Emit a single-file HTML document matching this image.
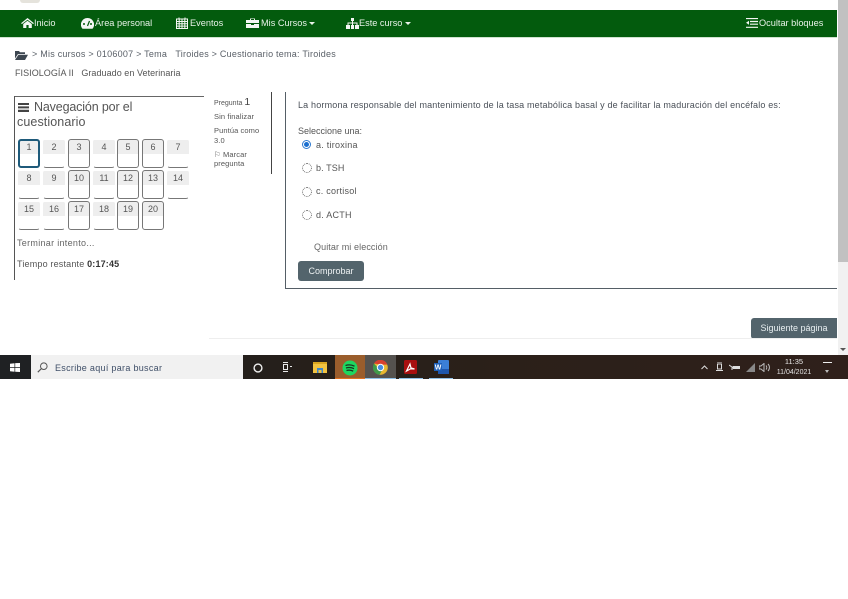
<!DOCTYPE html>
<html lang="es">
<head>
<meta charset="utf-8">
<title>Cuestionario tema: Tiroides</title>
<style>
html{margin:0;padding:0;background:#fff;width:848px;height:599px;overflow:hidden}
body{margin:0;padding:0;background:#fff;width:848px;height:599px;overflow:hidden;position:relative;font-family:"Liberation Sans",sans-serif;color:#4a5258;filter:blur(.3px)}
.a{position:absolute;white-space:nowrap}
.t{position:absolute;white-space:nowrap;font-size:9px;line-height:12px;letter-spacing:.1px}
svg{position:absolute;display:block}
.nav{color:#e8f2e8;font-size:9.2px;line-height:12px;top:17px}
.q{position:absolute;border:1px solid #777;border-radius:3px;background:linear-gradient(#eee 0,#eee 14px,#fff 14px);font-size:9px;line-height:14px;text-align:center;color:#555;box-sizing:border-box;height:29px;width:22px}
.q.n{border-color:transparent;border-bottom-color:#777;border-radius:3px}
.r{position:absolute;left:303px;width:8px;height:8px;border:1px dotted #666;border-radius:50%}
</style>
</head>
<body>
<div class="a" style="left:20px;top:0;width:20px;height:3px;background:#e5e3dc;border-radius:0 0 8px 8px"></div>

<!-- nav -->
<div class="a" style="left:0;top:10px;width:837px;height:27px;background:#035b0d;border-bottom:1px solid #cfe3cf"></div>
<svg style="left:21px;top:18px" width="13" height="10" viewBox="0 0 13 10"><path d="M6.500 0L13 5.200 12 6 6.500 1.800 1 6 0 5.200zM2.200 6L6.500 2.700 10.800 6v4H7.600V7H5.400v3H2.200z" fill="#f4f7f4"/></svg>
<div class="a nav" style="left:34px">Inicio</div>
<svg style="left:81px;top:18px" width="13" height="11" viewBox="0 0 13 11"><path d="M6.500 0a6.500 6.500 0 0 0-5 10.700h10A6.500 6.500 0 0 0 6.500 0z" fill="#f4f7f4"/><path d="M6.500 8L8.500 3" stroke="#035b0d" stroke-width="1.200"/><circle cx="3" cy="6" r="1" fill="#035b0d"/><circle cx="10" cy="6" r="1" fill="#035b0d"/></svg>
<div class="a nav" style="left:95px">Área personal</div>
<svg style="left:176px;top:17px" width="12" height="12" viewBox="0 0 12 12"><path d="M.5 2h11v9.500H.5zM.5 4.500h11M.5 6.800h11M.5 9.100h11M3.200 2v9.500M6 2v9.500M8.800 2v9.500M3 .5v2M9 .5v2" fill="none" stroke="#f4f7f4" stroke-width="1"/></svg>
<div class="a nav" style="left:190px">Eventos</div>
<svg style="left:246px;top:18px" width="13" height="10" viewBox="0 0 13 10"><path d="M4 2V.5h5V2h4v3H0V2zM5 1v1h3V1zM0 6h5v1h3V6h5v4H0z" fill="#f4f7f4"/></svg>
<div class="a nav" style="left:261px">Mis Cursos</div>
<svg style="left:309px;top:22px" width="6" height="3" viewBox="0 0 6 3"><path d="M0 0h6L3 3z" fill="#e8f2e8"/></svg>
<svg style="left:346px;top:18px" width="13" height="11" viewBox="0 0 13 11"><path d="M5 0h3v3H7v1.500h4.500V7H13v4H9V7h1.500V5.500H7V7h1v4H5V7h1V5.500H2.500V7H4v4H0V7h1.500V4.500H6V3H5z" fill="#f4f7f4"/></svg>
<div class="a nav" style="left:359px">Este curso</div>
<svg style="left:405px;top:22px" width="6" height="3" viewBox="0 0 6 3"><path d="M0 0h6L3 3z" fill="#e8f2e8"/></svg>
<svg style="left:746px;top:18px" width="12" height="10" viewBox="0 0 12 10"><path d="M0 .5h12M4 3.500h8M4 6.200h8M0 9.300h12" stroke="#f4f7f4" stroke-width="1.200"/><path d="M3 2.800v4L0 4.800z" fill="#f4f7f4"/></svg>
<div class="a nav" style="left:759px">Ocultar bloques</div>

<!-- breadcrumb -->
<svg style="left:15px;top:50px" width="13" height="10" viewBox="0 0 13 10"><path d="M0 1h4l1 1.200h5V4H3L0 8.500zM3.400 4.800H13L10 10H0z" fill="#3d4650"/></svg>
<div class="t" style="left:32px;top:48px;color:#5a6068;letter-spacing:.24px">&gt; Mis cursos &gt; 0106007 &gt; Tema&nbsp; &nbsp;Tiroides &gt; Cuestionario tema: Tiroides</div>
<div class="t" style="left:15px;top:67px;color:#555;letter-spacing:.05px">FISIOLOGÍA II&nbsp; &nbsp;Graduado en Veterinaria</div>

<!-- nav block -->
<div class="a" style="left:14px;top:96px;width:190px;height:1px;background:#666"></div>
<div class="a" style="left:14px;top:96px;width:1px;height:184px;background:#555"></div>
<svg style="left:18px;top:103px" width="11" height="9" viewBox="0 0 11 9"><path d="M0 0h11v2H0zM0 3.400h11v2H0zM0 6.800h11V9H0z" fill="#444"/></svg>
<div class="a" style="left:34px;top:100px;font-size:12.500px;line-height:15px;letter-spacing:-.15px;color:#555">Navegación por el</div>
<div class="a" style="left:17px;top:115px;font-size:12.500px;line-height:15px;letter-spacing:.1px;color:#555">cuestionario</div>

<div class="q" style="left:18px;top:139px;border:2px solid #1e5a7a;border-radius:3px;line-height:12px;background:linear-gradient(#eee 0,#eee 13px,#fff 13px)">1</div>
<div class="q n" style="left:43px;top:139px">2</div>
<div class="q" style="left:68px;top:139px">3</div>
<div class="q n" style="left:93px;top:139px">4</div>
<div class="q" style="left:117px;top:139px">5</div>
<div class="q" style="left:142px;top:139px">6</div>
<div class="q n" style="left:167px;top:139px">7</div>
<div class="q n" style="left:18px;top:170px">8</div>
<div class="q n" style="left:43px;top:170px">9</div>
<div class="q" style="left:68px;top:170px">10</div>
<div class="q n" style="left:93px;top:170px">11</div>
<div class="q" style="left:117px;top:170px">12</div>
<div class="q" style="left:142px;top:170px">13</div>
<div class="q n" style="left:167px;top:170px">14</div>
<div class="q n" style="left:18px;top:201px">15</div>
<div class="q n" style="left:43px;top:201px">16</div>
<div class="q" style="left:68px;top:201px">17</div>
<div class="q n" style="left:93px;top:201px">18</div>
<div class="q" style="left:117px;top:201px">19</div>
<div class="q" style="left:142px;top:201px">20</div>

<div class="t" style="left:17px;top:237px;color:#666;letter-spacing:.3px">Terminar intento...</div>
<div class="t" style="left:17px;top:258px;color:#555;letter-spacing:.18px">Tiempo restante <b style="color:#333">0:17:45</b></div>

<!-- question info -->
<div class="a" style="left:214px;top:96px;font-size:7px;line-height:12px;color:#555">Pregunta <span style="font-size:10.500px;color:#444">1</span></div>
<div class="a" style="left:214px;top:112px;font-size:7.500px;line-height:10px;color:#555;letter-spacing:.1px">Sin finalizar</div>
<div class="a" style="left:214px;top:126px;font-size:7.500px;line-height:10px;color:#555;letter-spacing:.1px">Puntúa como<br>3.0</div>
<div class="a" style="left:214px;top:150px;font-size:7.500px;line-height:9px;color:#555;letter-spacing:.1px">⚐ Marcar<br>pregunta</div>
<div class="a" style="left:271px;top:92px;width:1px;height:82px;background:#444"></div>

<!-- question content -->
<div class="a" style="left:285px;top:92px;width:1px;height:197px;background:#555e66"></div>
<div class="a" style="left:285px;top:288px;width:552px;height:1px;background:#555e66"></div>
<div class="t" style="left:298px;top:99px;color:#4a5058;letter-spacing:.18px">La hormona responsable del mantenimiento de la tasa metabólica basal y de facilitar la maduración del encéfalo es:</div>
<div class="t" style="left:298px;top:125px;color:#555;letter-spacing:0">Seleccione una:</div>
<svg style="left:302px;top:140px" width="9" height="9" viewBox="0 0 9 9"><circle cx="4.500" cy="4.500" r="4" fill="#fff" stroke="#2f7ad0"/><circle cx="4.500" cy="4.500" r="2.500" fill="#1a6fd0"/></svg>
<div class="t" style="left:316px;top:139px;color:#555;letter-spacing:.25px">a. tiroxina</div>
<div class="r" style="top:163px;left:302px"></div>
<div class="t" style="left:316px;top:162px;color:#555">b. TSH</div>
<div class="r" style="top:187px;left:302px"></div>
<div class="t" style="left:316px;top:185px;color:#555;letter-spacing:.25px">c. cortisol</div>
<div class="r" style="top:210px;left:302px"></div>
<div class="t" style="left:316px;top:209px;color:#555;letter-spacing:.25px">d. ACTH</div>
<div class="t" style="left:314px;top:241px;color:#666;letter-spacing:.1px">Quitar mi elección</div>
<div class="a" style="left:298px;top:261px;width:66px;height:20px;background:#53646c;border-radius:3px;color:#eef2f3;font-size:9px;line-height:20px;text-align:center">Comprobar</div>

<!-- next -->
<div class="a" style="left:751px;top:318px;width:86px;height:21px;background:#53646c;border-radius:3px 0 0 3px;color:#e8eef0;font-size:9px;line-height:21px;text-align:center">Siguiente página</div>
<div class="a" style="left:209px;top:338px;width:628px;height:1px;background:#eee"></div>

<!-- scrollbar -->
<div class="a" style="left:838px;top:0;width:10px;height:355px;background:#f1f1f1"></div>
<div class="a" style="left:838px;top:0;width:10px;height:262px;background:#c1c1c1"></div>
<svg style="left:840px;top:348px" width="6" height="3" viewBox="0 0 6 3"><path d="M0 0h6L3 3z" fill="#555"/></svg>

<!-- taskbar -->
<div class="a" style="left:0;top:355px;width:848px;height:24px;background:linear-gradient(90deg,#1f2123 0,#1f2123 30px,#241f1b 243px,#2b2019 500px,#2f201b 848px)"></div>
<svg style="left:10px;top:363px" width="10" height="9" viewBox="0 0 10 9"><path d="M0 .8L4.500 .2v3.900H0zM5.200 .1L10 0v4.100H5.200zM0 4.900h4.500v3.800L0 8.200zM5.200 4.900H10V9L5.200 8.800z" fill="#fff"/></svg>
<div class="a" style="left:31px;top:355px;width:212px;height:24px;background:#f1f1f1"></div>
<svg style="left:37px;top:362px" width="11" height="11" viewBox="0 0 11 11"><circle cx="6.800" cy="4.200" r="3.300" fill="none" stroke="#555" stroke-width="1"/><path d="M4.500 6.500L.8 10.200" stroke="#555" stroke-width="1.200"/></svg>
<div class="t" style="left:55px;top:362px;color:#3f4f68;letter-spacing:.3px">Escribe aquí para buscar</div>

<svg style="left:253px;top:363px" width="10" height="10" viewBox="0 0 10 10"><circle cx="5" cy="5" r="3.900" fill="none" stroke="#f0f0f0" stroke-width="1.400"/></svg>
<svg style="left:282px;top:362px" width="11" height="11" viewBox="0 0 11 11"><path d="M1 .5h5M1 9.500h5M1.500 2.500h4v5h-4z" fill="none" stroke="#e8e8e8"/><path d="M8 4h2v1H8z" fill="#e8e8e8"/></svg>
<svg style="left:313px;top:362px" width="14" height="11" viewBox="0 0 14 11"><path d="M0 0h14v11H0z" fill="#f2c341"/><path d="M0 0h14v2H0z" fill="#d9a520"/><path d="M4 6h6v5H8.500V8h-3v3H4z" fill="#3f86c8"/></svg>
<div class="a" style="left:335px;top:355px;width:30px;height:24px;background:#9a5d2c"></div>
<div class="a" style="left:335px;top:378px;width:30px;height:1px;background:#e07020"></div>
<svg style="left:342px;top:360px" width="16" height="16" viewBox="0 0 16 16"><circle cx="8" cy="8" r="7.500" fill="#1ed760"/><path d="M3.500 5.500c3-1 6-.8 9 .7M4 8c2.600-.8 5.300-.6 8 .7M4.500 10.500c2.200-.6 4.500-.4 6.700.6" fill="none" stroke="#17341f" stroke-width="1.300"/></svg>
<div class="a" style="left:365px;top:355px;width:31px;height:24px;background:#55524f"></div>
<div class="a" style="left:365px;top:378px;width:31px;height:1px;background:#8fc0e8"></div>
<svg style="left:373px;top:360px" width="15" height="15" viewBox="0 0 15 15"><circle cx="7.500" cy="7.500" r="7.300" fill="#e8b730"/><path d="M1 3.500A7.300 7.300 0 0 1 14.200 4.600H7.500z" fill="#d8402f"/><path d="M1 3.500A7.300 7.300 0 0 0 6.500 14.700L9.800 9 5 8z" fill="#3f9a4a"/><circle cx="7.500" cy="7.500" r="3.200" fill="#4a8fe0" stroke="#fff"/></svg>
<svg style="left:404px;top:360px" width="13" height="14" viewBox="0 0 13 14"><rect width="13" height="14" rx="1.500" fill="#a80f0f"/><path d="M2.500 11L6 4l1 4 3.500 1-4-.2z" fill="none" stroke="#fff" stroke-width="1.200"/></svg>
<div class="a" style="left:399px;top:378px;width:24px;height:1px;background:#8fc0e8"></div>
<svg style="left:434px;top:360px" width="15" height="14" viewBox="0 0 15 14"><rect x="4" width="11" height="14" rx="1" fill="#3b7fd6"/><rect x="4" y="9" width="11" height="5" fill="#1f57ad"/><rect y="3" width="8" height="8" fill="#1d5fb8"/><text x="4" y="9.500" font-size="7" font-family="Liberation Sans" font-weight="bold" fill="#fff" text-anchor="middle">W</text></svg>
<div class="a" style="left:429px;top:378px;width:24px;height:1px;background:#8fc0e8"></div>

<svg style="left:701px;top:365px" width="7" height="5" viewBox="0 0 7 5"><path d="M.5 4L3.500 1 6.500 4" fill="none" stroke="#ddd"/></svg>
<svg style="left:716px;top:362px" width="7" height="10" viewBox="0 0 7 10"><path d="M1 0h5M1.500 2h4v5h-4zM0 8.500h7" fill="none" stroke="#ddd"/></svg>
<svg style="left:729px;top:364px" width="11" height="7" viewBox="0 0 11 7"><path d="M0 1l3 2h5v1H3v2" fill="none" stroke="#ddd"/><rect x="4" y="2" width="7" height="3" fill="#ddd"/></svg>
<svg style="left:746px;top:363px" width="9" height="9" viewBox="0 0 9 9"><path d="M0 9L9 0v9z" fill="#888"/></svg>
<svg style="left:759px;top:363px" width="11" height="9" viewBox="0 0 11 9"><path d="M0 3h2l3-2.500v8L2 6H0z" fill="none" stroke="#bbb"/><path d="M7 2.500a3 3 0 0 1 0 4M9 1a5 5 0 0 1 0 7" fill="none" stroke="#bbb"/></svg>
<div class="a" style="left:776px;top:357px;width:36px;text-align:center;font-size:7.500px;line-height:10px;color:#e8e8e8">11:35</div>
<div class="a" style="left:775px;top:368px;width:38px;text-align:center;font-size:7px;line-height:10px;color:#e0e0e0">11/04/2021</div>
<div class="a" style="left:823px;top:362px;width:9px;height:1px;background:#eee"></div>
<svg style="left:825px;top:370px" width="4" height="3" viewBox="0 0 4 3"><path d="M0 0h4L2 3z" fill="#bbb"/></svg>
</body>
</html>
